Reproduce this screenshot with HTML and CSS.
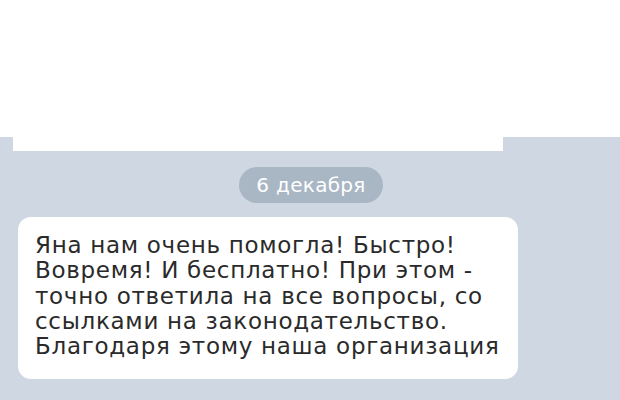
FILE: index.html
```html
<!DOCTYPE html>
<html lang="ru">
<head>
<meta charset="utf-8">
<link rel="stylesheet" href="styles.css">
</head>
<body>
<div class="top"></div>
<div class="chat">
  <div class="prev"></div>
  <div class="date-row"><span class="date">6 декабря</span></div>
  <div class="bubble">Яна нам очень помогла! Быстро!<br>Вовремя! И бесплатно! При этом -<br>точно ответила на все вопросы, со<br>ссылками на законодательство.<br>Благодаря этому наша организация</div>
</div>
</body>
</html>
```
FILE: styles.css
```css
html, body {
  margin: 0;
  padding: 0;
  width: 620px;
  height: 400px;
  overflow: hidden;
  background: #cfd8e2;
}
.top {
  height: 137px;
  background: #ffffff;
}
.chat {
  background: #cfd8e2;
  height: 263px;
  display: flex;
  flex-direction: column;
  align-items: flex-start;
}
.prev {
  margin-left: 13px;
  width: 490px;
  height: 14px;
  background: #ffffff;
}
.date-row {
  align-self: stretch;
  display: flex;
  justify-content: center;
  padding-top: 16px;
}
.date {
  display: inline-flex;
  align-items: center;
  justify-content: center;
  width: 144px;
  height: 36px;
  margin-left: 2px;
  border-radius: 18px;
  background: #a9b6c4;
  color: #ffffff;
  font-family: "DejaVu Sans", sans-serif;
  font-size: 20px;
  letter-spacing: 0.3px;
}
.bubble {
  margin-top: 14px;
  margin-left: 18px;
  width: 500px;
  box-sizing: border-box;
  padding: 16px 0 20px 17px;
  background: #ffffff;
  border-radius: 13px;
  color: #2a2a2a;
  font-family: "DejaVu Sans", sans-serif;
  font-size: 23px;
  line-height: 25.3px;
  letter-spacing: 0.7px;
  white-space: nowrap;
}
```
